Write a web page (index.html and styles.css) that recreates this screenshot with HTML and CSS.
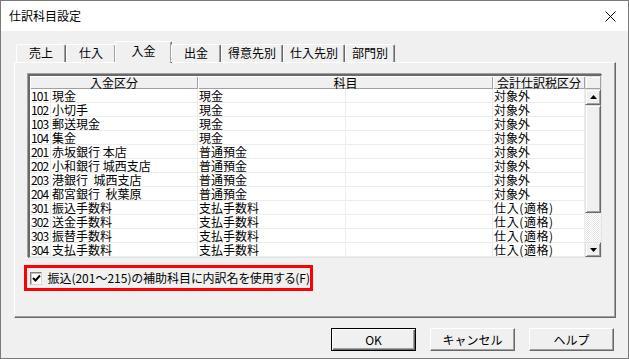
FILE: index.html
```html
<!DOCTYPE html>
<html lang="ja">
<head>
    <meta charset="UTF-8">
    <title>仕訳科目設定</title>
    <link rel="stylesheet" href="styles.css">
</head>
<body>
    <div class="window">
        <header class="titlebar">
            <span class="title">仕訳科目設定</span>
            <svg class="close" width="11" height="11" viewBox="0 0 11 11">
                <path d="M0.5 0.5L10.5 10.5M10.5 0.5L0.5 10.5" stroke="#000" stroke-width="1" fill="none"/>
            </svg>
        </header>

        <div class="content">
            <div class="tabs">
                <div class="tab">売上</div>
                <div class="tab">仕入</div>
                <div class="tab active">入金</div>
                <div class="tab">出金</div>
                <div class="tab">得意先別</div>
                <div class="tab">仕入先別</div>
                <div class="tab">部門別</div>
            </div>

            <div class="panel">
                <div class="grid">
                    <table class="list">
                        <colgroup>
                            <col class="c-code">
                            <col class="c-name">
                            <col class="c-kamoku">
                            <col class="c-sub">
                            <col class="c-tax">
                        </colgroup>
                        <thead>
                            <tr>
                                <th colspan="2">入金区分</th>
                                <th colspan="2">科目</th>
                                <th>会計仕訳税区分</th>
                            </tr>
                        </thead>
                        <tbody>
                            <tr><td class="code">101</td><td>現金</td><td>現金</td><td></td><td>対象外</td></tr>
                            <tr><td class="code">102</td><td>小切手</td><td>現金</td><td></td><td>対象外</td></tr>
                            <tr><td class="code">103</td><td>郵送現金</td><td>現金</td><td></td><td>対象外</td></tr>
                            <tr><td class="code">104</td><td>集金</td><td>現金</td><td></td><td>対象外</td></tr>
                            <tr><td class="code">201</td><td>赤坂銀行 本店</td><td>普通預金</td><td></td><td>対象外</td></tr>
                            <tr><td class="code">202</td><td>小和銀行 城西支店</td><td>普通預金</td><td></td><td>対象外</td></tr>
                            <tr><td class="code">203</td><td>港銀行  城西支店</td><td>普通預金</td><td></td><td>対象外</td></tr>
                            <tr><td class="code">204</td><td>都宮銀行  秋葉原</td><td>普通預金</td><td></td><td>対象外</td></tr>
                            <tr><td class="code">301</td><td>振込手数料</td><td>支払手数料</td><td></td><td class="tax">仕入(適格)</td></tr>
                            <tr><td class="code">302</td><td>送金手数料</td><td>支払手数料</td><td></td><td class="tax">仕入(適格)</td></tr>
                            <tr><td class="code">303</td><td>振替手数料</td><td>支払手数料</td><td></td><td class="tax">仕入(適格)</td></tr>
                            <tr><td class="code">304</td><td>支払手数料</td><td>支払手数料</td><td></td><td class="tax">仕入(適格)</td></tr>
                        </tbody>
                    </table>

                    <div class="scrollbar">
                        <div class="sb-btn sb-corner"></div>
                        <div class="sb-btn sb-arrow">
                            <svg width="7" height="4" viewBox="0 0 7 4"><path d="M3.5 0L7 4H0Z" fill="#000"/></svg>
                        </div>
                        <div class="sb-btn sb-thumb"></div>
                        <div class="sb-track"></div>
                        <div class="sb-btn sb-arrow sb-down">
                            <svg width="7" height="4" viewBox="0 0 7 4"><path d="M0 0H7L3.5 4Z" fill="#000"/></svg>
                        </div>
                    </div>
                </div>

                <label class="option">
                    <span class="checkbox">
                        <svg width="9" height="9" viewBox="0 0 9 9"><path d="M1 4L3.5 6.5L8 1.5" stroke="#000" stroke-width="2" fill="none"/></svg>
                    </span>
                    <span class="option-text">振込(201～215)の補助科目に内訳名を使用する(F)</span>
                </label>
            </div>

            <div class="buttons">
                <button class="btn btn-default">OK</button>
                <button class="btn">キャンセル</button>
                <button class="btn">ヘルプ</button>
            </div>
        </div>
    </div>
</body>
</html>
```

FILE: styles.css
```css
/* --- Dialog base --- */
:root {
    --face: #f0f0f0;
    --light: #ffffff;
    --shadow: #a0a0a0;
    --dark: #696969;
    --line: #ececec;
}

* {
    box-sizing: border-box;
    margin: 0;
    padding: 0;
}

body {
    width: 629px;
    height: 359px;
    overflow: hidden;
    background: var(--face);
    font-family: "Noto Sans CJK JP", sans-serif;
    font-size: 12px;
    color: #000;
}

.window {
    width: 629px;
    height: 359px;
    border: 1px solid #7a7a7a;
    background: var(--face);
}

/* --- Title bar --- */
.titlebar {
    height: 30px;
    background: #fff;
    display: flex;
    align-items: center;
    justify-content: space-between;
    padding: 0 12px 0 8px;
}

.title {
    line-height: 14px;
}

.content {
    padding: 10px 12px 0 13px;
}

/* --- Tabs --- */
.tabs {
    display: flex;
    align-items: flex-end;
    height: 21px;
    padding-left: 2px;
    position: relative;
    z-index: 1;
}

.tab {
    min-width: 50px;
    height: 18px;
    padding: 0 6px;
    text-align: center;
    line-height: 16px;
    white-space: nowrap;
    border-top: 1px solid var(--light);
    border-left: 1px solid var(--light);
    border-right: 1px solid var(--dark);
    box-shadow: inset -1px 0 0 var(--shadow);
    border-radius: 2px 2px 0 0;
    background: var(--face);
}

.tab.active {
    height: 22px;
    min-width: 57px;
    margin: 0 -1px -1px;
    line-height: 18px;
    padding-bottom: 2px;
}

/* --- Tab panel --- */
.panel {
    height: 256px;
    border-top: 1px solid var(--light);
    border-left: 1px solid var(--light);
    border-right: 1px solid var(--dark);
    border-bottom: 1px solid var(--dark);
    box-shadow: inset -1px -1px 0 var(--shadow);
    padding: 11px 0 0 13px;
}

/* --- List grid --- */
.grid {
    display: flex;
    width: 574px;
    height: 184px;
    background: #fff;
    border-top: 2px solid var(--dark);
    border-left: 2px solid var(--dark);
    border-right: 1px solid #e3e3e3;
    border-bottom: 1px solid #e3e3e3;
    box-shadow: -1px -1px 0 var(--shadow);
}

.list {
    width: 555px;
    table-layout: fixed;
    border-collapse: collapse;
}

.c-code { width: 21px; }
.c-name { width: 147px; }
.c-kamoku { width: 148px; }
.c-sub { width: 147px; }
.c-tax { width: 92px; }

.list th {
    height: 13px;
    font-weight: normal;
    line-height: 13px;
    background: var(--face);
    box-shadow: inset 1px 1px 0 var(--light), inset -1px -1px 0 var(--shadow);
    text-align: center;
    padding: 0;
}

.list td {
    height: 14px;
    line-height: 14px;
    padding: 0 0 0 1px;
    box-shadow: inset -1px -1px 0 var(--line);
    white-space: pre;
}

.list td.code {
    letter-spacing: -0.9px;
    padding-left: 1px;
}

.list td.tax {
    letter-spacing: 0.6px;
}

/* --- Scrollbar --- */
.scrollbar {
    width: 16px;
    display: flex;
    flex-direction: column;
}

.sb-btn {
    background: var(--face);
    border-top: 1px solid #e3e3e3;
    border-left: 1px solid #e3e3e3;
    border-right: 1px solid var(--dark);
    border-bottom: 1px solid var(--dark);
    box-shadow: inset 1px 1px 0 var(--light), inset -1px -1px 0 var(--shadow);
}

.sb-corner {
    height: 13px;
    border-right-color: var(--shadow);
    border-bottom-color: var(--shadow);
    box-shadow: inset 1px 1px 0 var(--light);
}

.sb-arrow {
    height: 16px;
    display: flex;
    align-items: center;
    justify-content: center;
}

.sb-down {
    height: 15px;
}

.sb-thumb {
    height: 108px;
}

.sb-track {
    flex: 1;
    background: repeating-conic-gradient(#ffffff 0 25%, #e6e6e6 0 50%) 0 0 / 2px 2px;
}

/* --- Option checkbox --- */
.option {
    display: flex;
    align-items: center;
    width: 289px;
    height: 26px;
    margin: 7px 0 0 -4px;
    padding-left: 3px;
    border: 3px solid #ff0000;
}

.checkbox {
    width: 13px;
    height: 13px;
    display: flex;
    align-items: center;
    justify-content: center;
    background: #fff;
    border-top: 1px solid #808080;
    border-left: 1px solid #808080;
    border-right: 1px solid #d4d4d4;
    border-bottom: 1px solid #d4d4d4;
    box-shadow: inset 1px 1px 0 #c0c0c0;
}

.option-text {
    margin-left: 5px;
    white-space: nowrap;
    font-feature-settings: "palt";
    line-height: 14px;
}

/* --- Dialog buttons --- */
.buttons {
    display: flex;
    justify-content: flex-end;
    gap: 14px;
    margin-top: 10px;
    padding-right: 2px;
}

.btn {
    width: 85px;
    height: 23px;
    font-family: inherit;
    font-size: 12px;
    color: #000;
    background: var(--face);
    border-top: 1px solid var(--light);
    border-left: 1px solid var(--light);
    border-right: 1px solid var(--dark);
    border-bottom: 1px solid var(--dark);
    box-shadow: inset -1px -1px 0 var(--shadow);
}

.btn-default {
    border: 1px solid #000;
    box-shadow: inset 1px 1px 0 var(--light), inset -1px -1px 0 var(--dark), inset -2px -2px 0 var(--shadow);
}
```
